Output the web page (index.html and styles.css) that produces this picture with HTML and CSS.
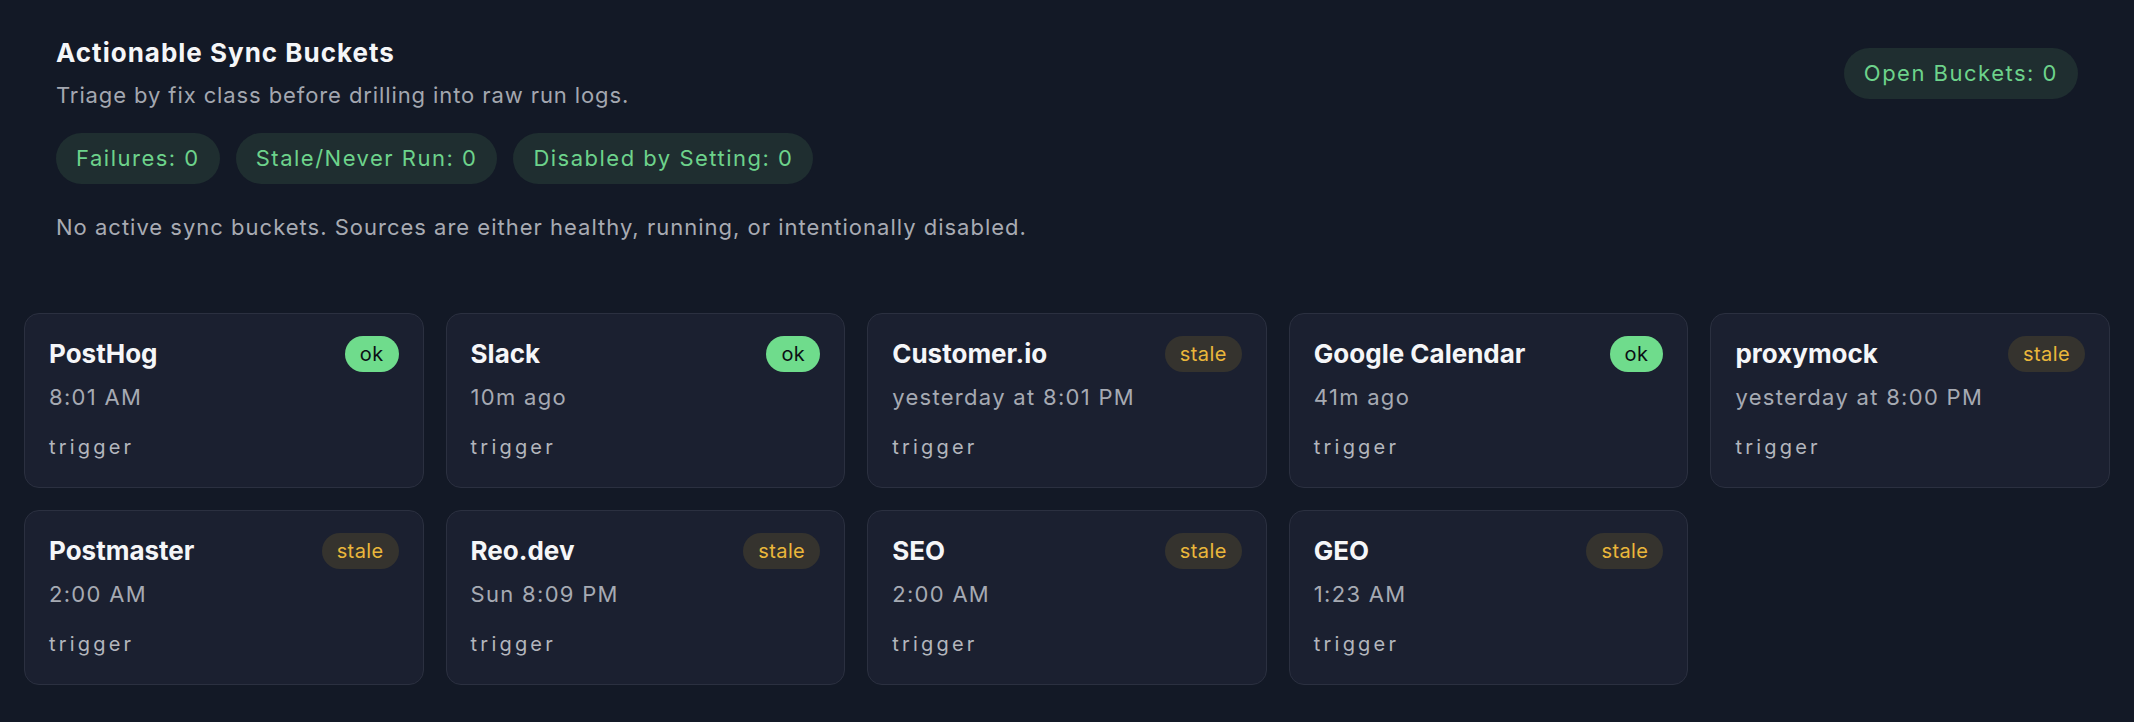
FILE: index.html
```html
<!DOCTYPE html>
<html lang="en">
<head>
<meta charset="utf-8">
<title>Actionable Sync Buckets</title>
<link rel="stylesheet" href="styles.css">
</head>
<body>
<div class="page">
  <section class="summary">
    <div class="summary-main">
      <h2 class="title">Actionable Sync Buckets</h2>
      <p class="subtitle">Triage by fix class before drilling into raw run logs.</p>
      <div class="pills">
        <span class="pill">Failures: 0</span>
        <span class="pill">Stale/Never Run: 0</span>
        <span class="pill">Disabled by Setting: 0</span>
      </div>
      <p class="empty">No active sync buckets. Sources are either healthy, running, or intentionally disabled.</p>
    </div>
    <span class="pill pill-open">Open Buckets: 0</span>
  </section>

  <section class="grid">
    <div class="card">
      <div class="card-head"><span class="card-name">PostHog</span><span class="badge badge-ok">ok</span></div>
      <div class="card-time">8:01 AM</div>
      <div class="card-kind">trigger</div>
    </div>
    <div class="card">
      <div class="card-head"><span class="card-name">Slack</span><span class="badge badge-ok">ok</span></div>
      <div class="card-time">10m ago</div>
      <div class="card-kind">trigger</div>
    </div>
    <div class="card">
      <div class="card-head"><span class="card-name">Customer.io</span><span class="badge badge-stale">stale</span></div>
      <div class="card-time">yesterday at 8:01 PM</div>
      <div class="card-kind">trigger</div>
    </div>
    <div class="card">
      <div class="card-head"><span class="card-name">Google Calendar</span><span class="badge badge-ok">ok</span></div>
      <div class="card-time">41m ago</div>
      <div class="card-kind">trigger</div>
    </div>
    <div class="card">
      <div class="card-head"><span class="card-name">proxymock</span><span class="badge badge-stale">stale</span></div>
      <div class="card-time">yesterday at 8:00 PM</div>
      <div class="card-kind">trigger</div>
    </div>
    <div class="card">
      <div class="card-head"><span class="card-name">Postmaster</span><span class="badge badge-stale">stale</span></div>
      <div class="card-time">2:00 AM</div>
      <div class="card-kind">trigger</div>
    </div>
    <div class="card">
      <div class="card-head"><span class="card-name">Reo.dev</span><span class="badge badge-stale">stale</span></div>
      <div class="card-time">Sun 8:09 PM</div>
      <div class="card-kind">trigger</div>
    </div>
    <div class="card">
      <div class="card-head"><span class="card-name">SEO</span><span class="badge badge-stale">stale</span></div>
      <div class="card-time">2:00 AM</div>
      <div class="card-kind">trigger</div>
    </div>
    <div class="card">
      <div class="card-head"><span class="card-name">GEO</span><span class="badge badge-stale">stale</span></div>
      <div class="card-time">1:23 AM</div>
      <div class="card-kind">trigger</div>
    </div>
  </section>
</div>
</body>
</html>
```
FILE: styles.css
```css
html, body {
  margin: 0;
  padding: 0;
  background: #131926;
}

body {
  font-family: Inter, "Noto Sans", "Liberation Sans", sans-serif;
  color: #f3f4f6;
}

.page {
  padding: 24px;
}

.summary {
  display: flex;
  justify-content: space-between;
  align-items: flex-start;
  padding: 12px 32px 0;
}

.summary-main {
  display: flex;
  flex-direction: column;
}

.title {
  margin: 0;
  font-size: 26px;
  line-height: 34px;
  font-weight: 700;
  letter-spacing: 1px;
  color: #f5f6f8;
}

.subtitle {
  margin: 10px 0 0;
  font-size: 22px;
  line-height: 31px;
  letter-spacing: 0.9px;
  color: #a3a7b0;
}

.pills {
  display: flex;
  gap: 16px;
  margin-top: 22px;
}

.pill {
  display: inline-block;
  padding: 10px 20px;
  border-radius: 999px;
  background: #1f2e30;
  color: #6dd38b;
  font-size: 22px;
  line-height: 31px;
  letter-spacing: 1.5px;
  white-space: nowrap;
}

.pill-open {
  margin-top: 12px;
}

.empty {
  margin: 28px 0 0;
  font-size: 22px;
  line-height: 31px;
  letter-spacing: 1px;
  color: #a8abb3;
}

.grid {
  display: grid;
  grid-template-columns: repeat(5, 1fr);
  gap: 22px;
  margin-top: 70px;
}

.card {
  display: flex;
  flex-direction: column;
  padding: 22px 24px 26px;
  background: #1b2030;
  border: 1px solid #2b3040;
  border-radius: 15px;
}

.card-head {
  display: flex;
  justify-content: space-between;
  align-items: center;
}

.card-name {
  font-size: 26px;
  line-height: 34px;
  font-weight: 700;
  color: #f5f6f8;
}

.badge {
  padding: 5px 15px;
  border-radius: 999px;
  font-size: 20px;
  line-height: 26px;
  letter-spacing: 0.4px;
}

.badge-ok {
  background: #6fdc8c;
  color: #0b0f14;
}

.badge-stale {
  background: #35332e;
  color: #eab73b;
}

.card-time {
  margin-top: 10px;
  font-size: 22px;
  line-height: 31px;
  letter-spacing: 1.3px;
  color: #a6aab3;
}

.card-kind {
  margin-top: 20px;
  font-size: 20px;
  line-height: 28px;
  letter-spacing: 3.2px;
  color: #b3b6bd;
}
```
